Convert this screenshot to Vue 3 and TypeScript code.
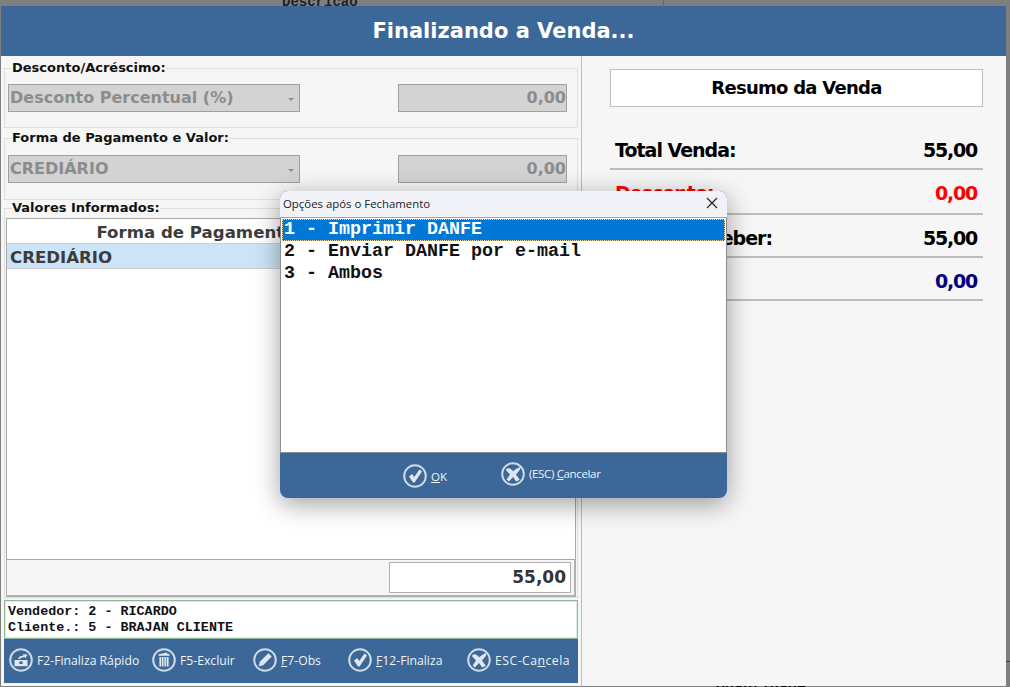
<script setup lang="ts">
const buttons = [
  { icon: 'cash', pre: 'F2-Finaliza Rápido', key: '', post: '' },
  { icon: 'trash', pre: 'F5-Excluir', key: '', post: '' },
  { icon: 'pen', pre: '', key: 'F', post: '7-Obs' },
  { icon: 'check', pre: '', key: 'F', post: '12-Finaliza' },
  { icon: 'x', pre: 'ESC-Ca', key: 'n', post: 'cela' },
]
const summary = [
  { label: 'Total Venda:', value: '55,00', cls: '' },
  { label: 'Desconto:', value: '0,00', cls: 'red tall' },
  { label: 'Total a Receber:', value: '55,00', cls: '' },
  { label: 'Troco:', value: '0,00', cls: 'navy' },
]
const options = ['1 - Imprimir DANFE', '2 - Enviar DANFE por e-mail', '3 - Ambos']
</script>

<template>
  <div class="screen">
    <span class="behind behind-top">Descrição</span>
    <span class="behind behind-bottom">Quantidade</span>
    <span class="behind-line"></span>
    <span class="behind-tick"></span>

    <main class="window">
      <header class="title">Finalizando a Venda...</header>
      <div class="body">
        <section class="left">
          <fieldset class="group g1">
            <legend>Desconto/Acréscimo:</legend>
            <div class="fields">
              <div class="select">Desconto Percentual (%)<i class="caret"></i></div>
              <div class="amount">0,00</div>
            </div>
          </fieldset>
          <fieldset class="group g2">
            <legend>Forma de Pagamento e Valor:</legend>
            <div class="fields">
              <div class="select">CREDIÁRIO<i class="caret"></i></div>
              <div class="amount">0,00</div>
            </div>
          </fieldset>
          <fieldset class="group g3">
            <legend>Valores Informados:</legend>
            <div class="grid">
              <div class="grid-head"><span class="c1">Forma de Pagamento</span><span class="c2">Valor</span></div>
              <div class="grid-row"><span class="c1 left-cell">CREDIÁRIO</span><span class="c2 right-cell">55,00</span></div>
            </div>
            <div class="grid-total"><div class="total-box">55,00</div></div>
          </fieldset>
          <div class="info">
            <div>Vendedor: 2 - RICARDO</div>
            <div>Cliente.: 5 - BRAJAN CLIENTE</div>
          </div>
          <nav class="actions">
            <div v-for="b in buttons" :key="b.icon" class="action">
              <svg class="ico" viewBox="0 0 24 24">
                <circle cx="12" cy="12" r="10.8" class="ring" />
                <path v-if="b.icon === 'check'" class="glyph" d="M6 12.5 L9.2 10 L11.2 13 L16.5 5.6 L19 7.5 L11.6 18.6 L10 18.6 Z" />
                <path v-else-if="b.icon === 'x'" class="glyph" d="M4.8 8 C6.5 5 9.5 6 12.2 9.3 C14.5 7 17 5.6 20 5 C19.2 8 17 10.2 15 12.5 L18.8 17.8 L15.2 19.4 L12 15 L8 19.4 L5.6 17.6 L9 12.4 C7.6 10.8 6 9.6 4.8 8 Z" />
                <path v-else-if="b.icon === 'pen'" class="glyph" d="M15.4 5.2 L18.8 8.6 L10.2 17.2 L5.8 18.2 L6.8 13.8 Z" />
                <g v-else-if="b.icon === 'trash'" class="glyph">
                  <path d="M6.5 6.2 L15 4.4 L15.3 5.7 L17.6 6.2 L17.6 7.8 L6.5 7.8 Z" />
                  <path d="M7.4 9 H9.2 V18.6 H7.4 Z M9.9 9 H11.5 V18.6 H9.9 Z M12.3 9 H13.9 V18.6 H12.3 Z M14.6 9 H16.6 V18.6 H14.6 Z" />
                </g>
                <g v-else class="glyph">
                  <path d="M5.5 12 L18.5 12 L18.5 18.2 L5.5 18.2 Z" />
                  <path d="M9 11 L10.5 8.6 L14.4 7.6 L14 6 L18.6 6.8 L16.2 10.4 L15.6 9 L11.6 10 L11 11 Z" />
                  <path d="M10.4 13.4 H13.6 V16 H10.4 Z" class="cut" />
                </g>
              </svg>
              <span class="action-text">{{ b.pre }}<u v-if="b.key">{{ b.key }}</u>{{ b.post }}</span>
            </div>
          </nav>
        </section>

        <aside class="right">
          <div class="resume">Resumo da Venda</div>
          <div class="rows">
            <div v-for="r in summary" :key="r.label" class="row" :class="r.cls">
              <span>{{ r.label }}</span><span class="val">{{ r.value }}</span>
            </div>
          </div>
        </aside>
      </div>
    </main>

    <div class="dialog">
      <div class="dlg-title">
        <span>Opções após o Fechamento</span>
        <svg class="close" viewBox="0 0 12 12"><path d="M1 1 L11 11 M11 1 L1 11" /></svg>
      </div>
      <ul class="list">
        <li v-for="(o, i) in options" :key="o" :class="{ sel: i === 0 }">{{ o }}</li>
      </ul>
      <div class="dlg-foot">
        <div class="dlg-btn ok">
          <svg class="ico" viewBox="0 0 24 24">
            <circle cx="12" cy="12" r="10.8" class="ring" />
            <path class="glyph" d="M6 12.5 L9.2 10 L11.2 13 L16.5 5.6 L19 7.5 L11.6 18.6 L10 18.6 Z" />
          </svg>
          <span><u>O</u>K</span>
        </div>
        <div class="dlg-btn cancel">
          <svg class="ico" viewBox="0 0 24 24">
            <circle cx="12" cy="12" r="10.8" class="ring" />
            <path class="glyph" d="M4.8 8 C6.5 5 9.5 6 12.2 9.3 C14.5 7 17 5.6 20 5 C19.2 8 17 10.2 15 12.5 L18.8 17.8 L15.2 19.4 L12 15 L8 19.4 L5.6 17.6 L9 12.4 C7.6 10.8 6 9.6 4.8 8 Z" />
          </svg>
          <span class="cancel-text">(ESC) <u>C</u>ancelar</span>
        </div>
      </div>
    </div>
  </div>
</template>

<style scoped>
.screen {
  position: relative;
  width: 1010px;
  height: 687px;
  overflow: hidden;
  background: #7f7f7f;
  font-family: "DejaVu Sans", sans-serif;
}
.behind {
  position: absolute;
  font-family: "Liberation Mono", monospace;
  font-size: 14px;
  font-weight: 700;
  color: #222;
  line-height: 16px;
}
.behind-top { left: 282px; top: -6px; }
.behind-bottom { left: 716px; top: 680px; color: #000; font-size: 15px; }
.behind-line { position: absolute; left: 663px; top: 0; width: 1px; height: 6px; background: #666; }
.behind-tick { position: absolute; left: 1006px; top: 661px; width: 4px; height: 1px; background: #24466a; }

.window {
  position: relative;
  margin: 6px 0 0 1px;
  width: 1005px;
  height: 680px;
  background: #f6f6f6;
  display: flex;
  flex-direction: column;
}
.title {
  height: 50px;
  background: #3b6898;
  color: #fff;
  font-size: 21px;
  font-weight: 700;
  line-height: 50px;
  text-align: center;
  flex: none;
}
.body { flex: 1; display: flex; min-height: 0; }
.left {
  width: 581px;
  box-sizing: border-box;
  padding: 4px 3px 3px 3px;
  border-right: 1px solid #bdbdbd;
  display: flex;
  flex-direction: column;
}
.group {
  margin: 0;
  padding: 0;
  border: 1px solid #dedede;
  box-sizing: border-box;
  width: 574px;
  min-width: 0;
  flex: none;
}
.group legend {
  margin-left: 7px;
  padding: 0;
  font-size: 13px;
  font-weight: 700;
  line-height: 16px;
  color: #111;
}
.g1 { height: 68px; }
.g2 { height: 70px; margin-top: 2px; }
.g3 { height: 398px; display: block; }
.fields {
  display: flex;
  justify-content: space-between;
  padding: 8px 10px 0 3px;
}
.g2 .fields { padding-top: 9px; }
.select, .amount {
  height: 28px;
  box-sizing: border-box;
  border: 1px solid #a0a0a0;
  background: #d3d3d3;
  color: #8c8c8c;
  font-size: 16px;
  font-weight: 700;
  line-height: 26px;
}
.select { position: relative; width: 292px; padding-left: 1px; }
.amount { width: 169px; text-align: right; padding-right: 0; }
.caret {
  position: absolute;
  right: 5px;
  top: 13px;
  border: 3px solid transparent;
  border-top-color: #8f8f8f;
  border-bottom: 0;
}
.grid {
  margin: 2px 1px 0 1px;
  height: 342px;
  box-sizing: border-box;
  background: #fff;
  border: 1px solid #a9a9a9;
  font-size: 16.6px;
  font-weight: 700;
  color: #3c3c3c;
}
.grid-head, .grid-row { display: flex; height: 25px; line-height: 27px; box-sizing: border-box; border-bottom: 1px solid #cfcfcf; }
.grid-row { background: #cce4f7; }
.c1 { width: 378px; text-align: center; }
.c2 { flex: 1; text-align: center; }
.left-cell { text-align: left; padding-left: 3px; }
.right-cell { text-align: right; padding-right: 8px; }
.grid-total {
  margin: 0 1px 0 1px;
  height: 37px;
  box-sizing: border-box;
  border: 1px solid #b0b0b0;
  border-top: 0;
  border-bottom-width: 2px;
  border-right-width: 2px;
  padding: 2px 3px 0 0;
  display: flex;
  justify-content: flex-end;
}
.total-box {
  width: 182px;
  height: 31px;
  box-sizing: border-box;
  border: 1px solid #b0b0b0;
  background: #fff;
  font-size: 17px;
  font-weight: 700;
  color: #333;
  text-align: right;
  line-height: 29px;
  padding-right: 4px;
}
.info {
  margin-top: 2px;
  width: 574px;
  height: 39px;
  box-sizing: border-box;
  background: #fff;
  border: 1px solid #8fb79c;
  box-shadow: inset 0 0 0 1px #d9ecdf;
  padding: 3px 3px 0;
  font-family: "Liberation Mono", monospace;
  font-size: 13.4px;
  font-weight: 700;
  line-height: 16px;
  color: #111;
}
.actions {
  width: 574px;
  height: 44px;
  background: #3b6898;
  display: grid;
  grid-template-columns: 143px 101px 95px 119px 1fr;
  align-items: center;
  padding: 0 0 2px 5px;
  box-sizing: border-box;
  flex: none;
}
.action { display: flex; align-items: center; gap: 4px; }
.action-text {
  color: #f0f3f7;
  font-family: "Open Sans", sans-serif;
  font-size: 12.2px;
  white-space: nowrap;
}
.action:last-child .action-text { letter-spacing: 0.5px; }
.ico { width: 24px; height: 24px; flex: none; }
.ring { fill: none; stroke: #cfd9e4; stroke-width: 2; }
.glyph { fill: #dfe6ee; stroke: none; }
.cut { fill: #3b6898; }

.right { flex: 1; padding: 13px 23px 0 28px; }
.resume {
  height: 38px;
  box-sizing: border-box;
  border: 1px solid #c0c0c0;
  background: #fff;
  font-size: 18px;
  letter-spacing: -0.73px;
  font-weight: 700;
  color: #000;
  text-align: center;
  line-height: 36px;
}
.rows { margin-top: 20px; }
.row {
  height: 43px;
  box-sizing: border-box;
  border-bottom: 2px solid #bdbdbd;
  padding: 0 6px 6px 5px;
  display: flex;
  justify-content: space-between;
  align-items: flex-end;
  font-size: 19px;
  letter-spacing: -1px;
  font-weight: 700;
  color: #000;
  line-height: 24px;
}
.val { letter-spacing: -1.2px; }
.row.tall { height: 45px; padding-bottom: 8px; }
.row.red { color: #f00; }
.row.navy { color: #000080; }

.dialog {
  position: absolute;
  left: 280px;
  top: 191px;
  width: 447px;
  height: 307px;
  border-radius: 8px;
  overflow: hidden;
  background: #3b6898;
  box-shadow: 0 6px 26px rgba(0, 0, 0, 0.38);
  display: flex;
  flex-direction: column;
}
.dlg-title {
  height: 26px;
  flex: none;
  background: #f2f3f9;
  display: flex;
  align-items: center;
  justify-content: space-between;
  padding: 0 9px 2px 3px;
  box-sizing: border-box;
  font-family: "Open Sans", sans-serif;
  font-size: 11.4px;
  color: #222;
}
.close { width: 12px; height: 12px; }
.close path { stroke: #222; stroke-width: 1.1; fill: none; }
.list {
  flex: none;
  height: 236px;
  margin: 0;
  padding: 1px 1px 0;
  list-style: none;
  background: #fff;
  box-sizing: border-box;
  border: 1px solid #8a8d92;
  border-top-color: #a0a3a8;
  font-family: "Liberation Mono", monospace;
  font-size: 18.33px;
  font-weight: 700;
  color: #111;
}
.list li { height: 22px; line-height: 22px; padding-left: 2px; box-sizing: border-box; white-space: pre; }
.list li.sel { background: #0078d7; color: #fff; outline: 1px dotted #e8d9a8; outline-offset: -1px; }
.dlg-foot {
  flex: 1;
  display: flex;
  align-items: center;
  padding-left: 123px;
  color: #f0f3f7;
  font-family: "Open Sans", sans-serif;
  font-size: 11.5px;
}
.dlg-btn { display: flex; align-items: center; gap: 4px; }
.ok { width: 98px; padding-top: 1px; }
.cancel { padding-bottom: 4px; }
.cancel-text { letter-spacing: -0.35px; }
</style>
